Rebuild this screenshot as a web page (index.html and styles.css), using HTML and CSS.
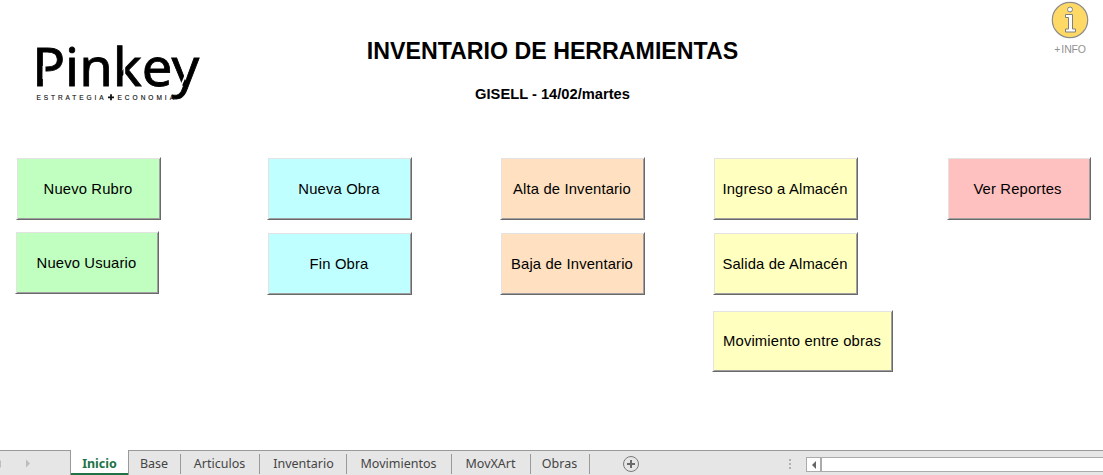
FILE: index.html
```html
<!DOCTYPE html>
<html lang="es">
<head>
<meta charset="utf-8">
<title>Inventario de Herramientas</title>
<link rel="stylesheet" href="styles.css">
</head>
<body>
<main class="sheet">
  <header class="header">
    <svg class="logo" width="176" height="70" viewBox="30 36 176 70" role="img" aria-label="Pinkey">
      <text class="logo-name" x="32.200" y="85.500" textLength="167" lengthAdjust="spacingAndGlyphs">Pinkey</text>
      <path class="logo-cut" d="M44 66v13" stroke-width="3"/>
      <path class="logo-cut" d="M124.300 62v25" stroke-width="1.800"/>
      <path class="logo-cut" d="M180.500 87l8.500-20" stroke-width="1.800"/>
      <text class="logo-tag" x="36.500" y="99.500" textLength="67" lengthAdjust="spacing">ESTRATEGIA</text>
      <path class="logo-plus" d="M108 97.300h6M111 94.300v6"/>
      <text class="logo-tag" x="117.500" y="99.500" textLength="56.500" lengthAdjust="spacing">ECONOMIA</text>
    </svg>
    <div class="titles">
      <h1 class="title">INVENTARIO DE HERRAMIENTAS</h1>
      <p class="subtitle">GISELL - 14/02/martes</p>
    </div>
    <div class="info">
      <svg class="info-icon" width="38" height="38" viewBox="0 0 38 38">
        <circle cx="19" cy="19" r="17.700" fill="#ffd966" stroke="#8c8c8c" stroke-width="1.200"/>
        <circle cx="19" cy="8.500" r="2.500" fill="#fff" stroke="#808080"/>
        <path d="M14.500 13.500h7v14.500h3v3h-10v-3h3v-11.500h-3z" fill="#fff" stroke="#808080"/>
      </svg>
      <span class="info-label">+ INFO</span>
    </div>
  </header>
  <section class="actions">
    <div class="column rubros">
      <button class="btn green">Nuevo Rubro</button>
      <button class="btn green user">Nuevo Usuario</button>
    </div>
    <div class="column obras">
      <button class="btn cyan">Nueva Obra</button>
      <button class="btn cyan">Fin Obra</button>
    </div>
    <div class="column inventario">
      <button class="btn orange">Alta de Inventario</button>
      <button class="btn orange">Baja de Inventario</button>
    </div>
    <div class="column almacen">
      <button class="btn yellow">Ingreso a Almacén</button>
      <button class="btn yellow">Salida de Almacén</button>
      <button class="btn yellow wide">Movimiento entre obras</button>
    </div>
    <div class="column reportes">
      <button class="btn pink">Ver Reportes</button>
    </div>
  </section>
</main>
<footer class="tabbar">
  <svg class="nav" width="70" height="24" viewBox="0 0 70 24"><path d="M0 9.500h1v7H0zM26 8.500l4 4-4 4z" fill="#bdbdbd"/></svg>
  <nav class="tabs">
    <span class="tab active">Inicio</span>
    <span class="tab base">Base</span>
    <span class="tab articulos">Articulos</span>
    <span class="tab inv">Inventario</span>
    <span class="tab mov">Movimientos</span>
    <span class="tab movx">MovXArt</span>
    <span class="tab obr">Obras</span>
  </nav>
  <svg class="add" width="18" height="18" viewBox="0 0 18 18"><circle cx="9" cy="9" r="7.500" fill="none" stroke="#7a7a7a"/><path d="M5 9h8M9 5v8" stroke="#6a6a6a" stroke-width="2"/></svg>
  <svg class="grip" width="2" height="10" viewBox="0 0 2 10"><path d="M0 0h2v2H0zM0 4h2v2H0zM0 8h2v2H0z" fill="#b0b0b0"/></svg>
  <div class="scroll">
    <span class="arrow"><svg width="4" height="8" viewBox="0 0 4 8"><path d="M4 0v8L0 4z" fill="#666"/></svg></span>
  </div>
</footer>
</body>
</html>
```
FILE: styles.css
```css
* { box-sizing: border-box; }
body {
  margin: 0;
  width: 1103px;
  height: 475px;
  display: flex;
  flex-direction: column;
  overflow: hidden;
  background: #fff;
  color: #000;
  font-family: "Liberation Sans", Arial, sans-serif;
}
.sheet { height: 450px; }
.header {
  display: grid;
  grid-template-columns: 206px 1fr 206px;
  height: 157px;
}
.logo { margin: 36px 0 0 30px; overflow: visible; }
.logo-name {
  font: 53px "Noto Sans", sans-serif;
  stroke: #000;
  stroke-width: 0.800;
}
.logo-tag { font: 6.500px "Liberation Sans", sans-serif; fill: #111; stroke: #111; stroke-width: 0.150; }
.logo-plus { stroke: #111; stroke-width: 1.800; }
.logo-cut { stroke: #fff; fill: none; }
.titles { text-align: center; padding-left: 2px; }
.title {
  margin: 37px 0 0;
  font-size: 23.200px;
  line-height: 29px;
  white-space: nowrap;
}
.subtitle {
  margin: 19px 0 0;
  font-size: 14.700px;
  line-height: 18px;
  font-weight: bold;
}
.info {
  display: flex;
  flex-direction: column;
  align-items: center;
  width: 60px;
  margin: 1px 0 0 143px;
}
.info-label {
  margin-top: 4px;
  font-size: 10.500px;
  line-height: 12px;
  letter-spacing: -0.150px;
  word-spacing: -1.500px;
  color: #929292;
}
.actions { display: flex; align-items: flex-start; padding-left: 15px; }
.column { display: flex; flex-direction: column; gap: 12px; }
.rubros { width: 252px; gap: 11px; padding-left: 1px; }
.obras { width: 233px; }
.inventario { width: 212px; }
.almacen { width: 235px; padding-left: 1px; }
.btn {
  width: 145px;
  height: 63px;
  flex: none;
  padding: 0 1px 0 0;
  border: 1px solid;
  border-color: #fff #696969 #696969 #fff;
  box-shadow: inset 1px 1px #e3e3e3, inset -1px -1px #a0a0a0;
  font: 14.800px "Liberation Sans", Arial, sans-serif;
  letter-spacing: 0.150px;
  color: #000;
  white-space: nowrap;
}
.user { width: 144px; margin-left: -1px; }
.wide { width: 181px; height: 62px; margin: 3px 0 0 -1px; padding-bottom: 1px; }
.reportes .btn { width: 144px; padding-right: 3px; }
.green { background: #c0ffc0; }
.cyan { background: #c0ffff; }
.orange { background: #ffe0c0; }
.yellow { background: #ffffc0; }
.pink { background: #ffc0c0; }
.tabbar {
  display: flex;
  height: 25px;
  border-top: 1px solid #999;
  background: #e6e6e6;
}
.nav { flex: none; }
.tabs { display: flex; height: 24px; }
.tab {
  position: relative;
  display: flex;
  justify-content: center;
  padding-right: 2px;
  font: 12.500px/26px "Noto Sans", "Open Sans", sans-serif;
  color: #444;
}
.tab:not(.active)::after {
  content: "";
  position: absolute;
  right: 0;
  top: 3px;
  width: 1px;
  height: 20px;
  background: #999;
}
.active {
  width: 59px;
  height: 25px;
  margin-top: -1px;
  padding-right: 0;
  line-height: 28px;
  border: 1px solid #999;
  border-width: 0 1px 0 1px;
  background: linear-gradient(#217346, #217346) bottom / 100% 2px no-repeat #fff;
  color: #217346;
  font-weight: bold;
}
.base { width: 52px; }
.articulos { width: 79px; }
.inv { width: 87px; padding-right: 0; }
.mov { width: 105px; }
.movx { width: 79px; }
.obr { width: 59px; }
.add { margin: 4px 0 0 32px; }
.grip { margin: 8px 0 0 149px; }
.scroll {
  flex: 1;
  height: 15px;
  margin: 6px 0 0 15px;
  border: 1px solid #ababab;
  border-right: 0;
  background: #fff;
}
.arrow {
  display: flex;
  align-items: center;
  justify-content: center;
  width: 15px;
  height: 13px;
  border-right: 2px solid #ababab;
}
```
